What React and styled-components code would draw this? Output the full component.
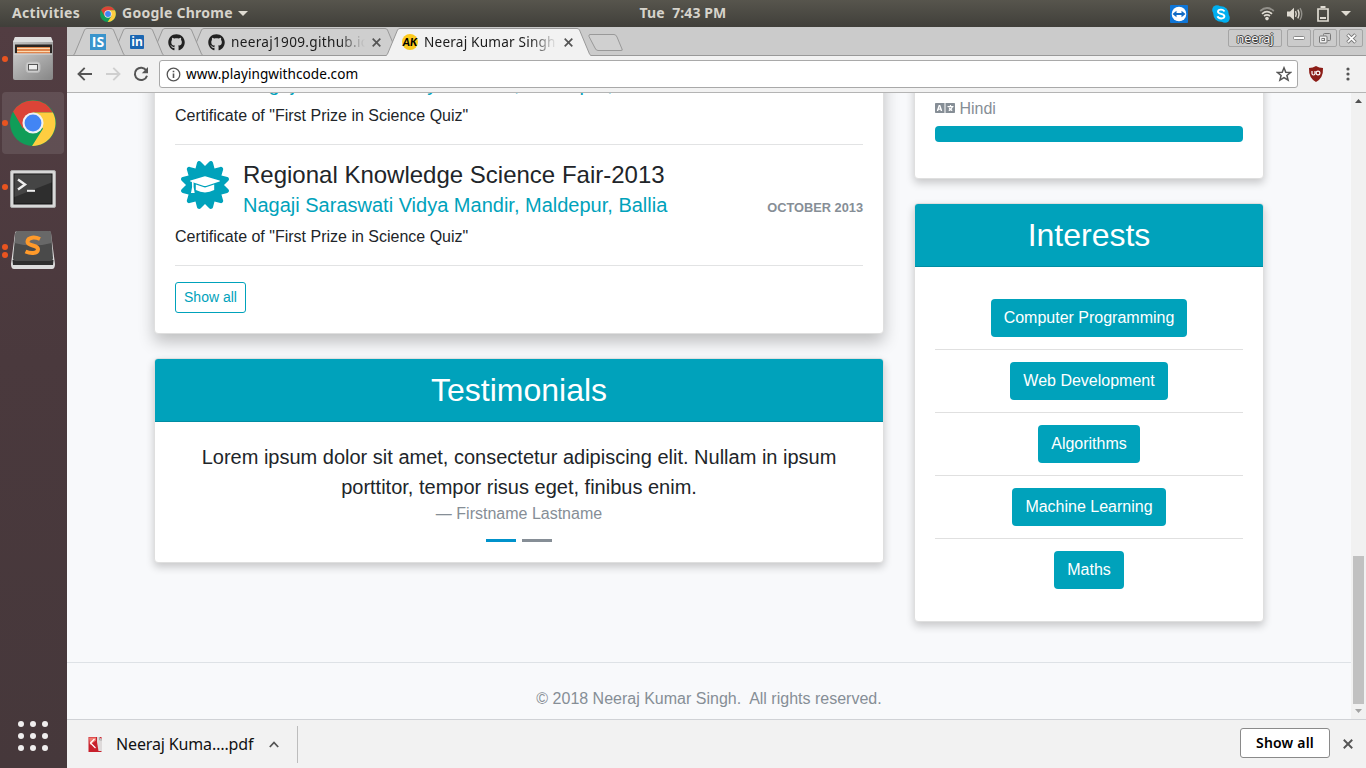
import React from "react";
import styled, { createGlobalStyle } from "styled-components";
import { FaCertificate, FaLanguage, FaGithub } from "react-icons/fa";

const teal = "#00a2bb";
const ui = '"Noto Sans", "Open Sans", sans-serif';

const Global = createGlobalStyle`
  * { box-sizing: border-box; }
  body { margin: 0; overflow: hidden; font-family: "Liberation Sans", Arial, sans-serif; }
  h2, h3, h4, p { margin: 0; font-weight: 400; }
  button { font: inherit; margin: 0; }
  svg { display: block; flex: none; }
`;

const Desktop = styled.div`
  width: 1366px; height: 768px; display: flex; flex-direction: column; overflow: hidden;
`;

/* ---------- top panel ---------- */
const Panel = styled.header`
  height: 27px; flex: none; display: grid; grid-template-columns: 1fr auto 1fr;
  align-items: center; background: linear-gradient(#57554d, #403f3a);
  color: #d6d3cb; font: 700 14px/27px ${ui};
`;
const PanelLeft = styled.div`display: flex; align-items: center; padding-left: 12px;`;
const PanelText = styled.span`
  letter-spacing: ${(p) => p.$ls || 0}px; margin-right: ${(p) => p.$mr || 0}px;
  margin-left: ${(p) => p.$ml || 0}px; white-space: pre; line-height: 25px; padding-bottom: 2px;
`;
const Tray = styled.div`display: flex; align-items: center; justify-content: flex-end; padding-right: 15px;`;
const TrayItem = styled.span`margin-left: ${(p) => p.$gap}px;`;

/* ---------- dock ---------- */
const Workspace = styled.div`flex: 1; display: flex; min-height: 0;`;
const Dock = styled.nav`
  width: 67px; flex: none; display: flex; flex-direction: column; padding: 1px 2px 17px;
  background: linear-gradient(#523d42, #4a393d 45%, #46383b);
`;
const DockItem = styled.div`
  width: 62px; height: 62px; margin-bottom: 2px; border-radius: 4px; display: flex; align-items: center;
  background: ${(p) => (p.$active ? "rgba(255,255,255,.1)" : "transparent")};
`;
const Dots = styled.span`
  width: 6px; display: flex; flex-direction: column; gap: 2px; margin-right: 2px;
  i { width: 6px; height: 6px; border-radius: 50%; background: #e95420; }
`;
const AppsGrid = styled.div`
  margin: auto 0 0 16px; display: grid; grid-template-columns: repeat(3, 6px); gap: 6px;
  i { width: 6px; height: 6px; border-radius: 50%; background: #f0eeee; }
`;

/* ---------- browser ---------- */
const Browser = styled.main`flex: 1; min-width: 0; display: flex; flex-direction: column; background: #f2f2f2;`;
const TabStrip = styled.div`
  height: 29px; flex: none; display: flex; align-items: flex-start; padding-left: 6px;
  background: #cbcbcb; box-shadow: inset 0 -1px #999;
`;
const TabBox = styled.div`
  position: relative; width: ${(p) => p.$w}px; height: 29px; flex: none; margin-right: -13px;
  z-index: ${(p) => p.$z}; display: flex; align-items: center; padding: 1px 17px 0 ${(p) => p.$pad || 17}px;
  > svg:first-child { position: absolute; left: 0; top: 0; z-index: -1; }
`;
const TabTitle = styled.span`
  font: 13.6px/20px ${ui}; letter-spacing: ${(p) => p.$ls}px; color: #1c1c1c; white-space: nowrap; overflow: hidden;
  width: ${(p) => p.$w}px; margin: 0 7px 0 6px; flex: none;
  mask-image: linear-gradient(90deg, #000 80%, transparent);
`;
const IsBadge = styled.span`
  width: 16px; height: 16px; background: #3a94cc; color: #fff; font: 700 14px/16px "Open Sans", sans-serif;
  text-align: center; flex: none;
`;
const InBadge = styled.span`
  width: 14px; height: 14px; border-radius: 1px; background: #1a66b2; color: #fff; margin-left: 1px;
  font: 700 12px/13px "Open Sans", sans-serif; text-align: center;
`;
const AkBadge = styled.span`
  width: 16px; height: 16px; border-radius: 50%; background: #fcca1e; color: #000; display: flex;
  align-items: center; justify-content: center; font: italic 900 11px/16px Lato, sans-serif;
`;
const WindowButtons = styled.div`display: flex; margin: 2px 3px 0 auto; gap: 2px;`;
const WindowButton = styled.span`
  width: ${(p) => p.$w || 24}px; height: 18px; border: 1px solid #a5a5a5; border-radius: 2px;
  margin-right: ${(p) => p.$mr || 0}px;
  display: flex; align-items: center; justify-content: center;
  font: 12.5px/15px ${ui}; color: #f6f6f6;
  text-shadow: 0 1px #444, 1px 0 #444, -1px 0 #444, 0 -1px #444;
`;
const Toolbar = styled.div`
  height: 37px; flex: none; display: flex; align-items: center; padding: 0 10px; background: #f2f2f2;
  border-bottom: 1px solid #b4b4b4;
`;
const NavIcons = styled.div`display: flex; gap: 12px; width: 82px;`;
const Omnibox = styled.div`
  width: 1139px; height: 28px; border: 1px solid #a9a9a9; border-radius: 3px; background: #fff;
  display: flex; align-items: center; padding: 0 5px 0 6px; font: 13.6px/20px ${ui}; color: #000;
`;
const Url = styled.span`flex: 1; margin-left: 5px; letter-spacing: 0.04px;`;
const ToolbarEnd = styled.div`display: flex; align-items: center; gap: 22px; margin-left: 10px;`;

const Viewport = styled.div`flex: 1; min-height: 0; display: flex; background: #f8f9fb;`;
const Page = styled.div`
  flex: 1; display: flex; flex-direction: column; overflow: hidden; color: #212529; font-size: 16px; line-height: 24px;
`;
const Columns = styled.div`
  width: 1110px; margin: -30px auto 0; display: grid; grid-template-columns: 730px 350px; column-gap: 30px;
  height: 599px; flex: none; align-items: start;
`;
const Column = styled.div`display: flex; flex-direction: column; gap: 24px;`;
const Card = styled.section`
  background: #fff; border: 1px solid #dfdfdf; border-radius: 4px;
  height: ${(p) => p.$h}px; overflow: hidden;
  box-shadow: ${(p) => (p.$raised ? "0 8px 16px rgba(0,0,0,.23)" : "0 4px 8px rgba(0,0,0,.2)")};
`;
const CardTitle = styled.h2`
  height: 63px; padding-top: 12px; text-align: center; background: ${teal}; color: #fff;
  font-size: 32px; line-height: 38px; border-bottom: 1px solid rgba(0, 0, 0, 0.125);
`;
const CardBody = styled.div`padding: ${(p) => p.$pad || "20px"};`;
const Rule = styled.hr`border: 0; height: 1px; background: #e2e3e4; margin: 16px 0;`;
const Entry = styled.article`
  display: grid; grid-template-columns: 60px 1fr; column-gap: 8px;
  &:first-child { margin-top: -24px; }
`;
const Badge = styled.div`
  height: 50px; width: 60px; margin-top: -1px; display: grid; place-items: center; color: ${teal};
  > svg { grid-area: 1 / 1; }
`;
const EntryTitle = styled.h3`font-size: 24px; line-height: 27px; white-space: nowrap;`;
const EntryMeta = styled.div`display: flex; justify-content: space-between; align-items: baseline; margin-top: 5px; height: 24px;`;
const School = styled.h4`font-size: 20px; line-height: 24px; color: ${teal};`;
const When = styled.span`font-size: 12.8px; line-height: 24px; font-weight: 700; color: #868e96; text-transform: uppercase;`;
const Description = styled.p`grid-column: 1 / -1; margin-top: 8px; line-height: 24px;`;
const OutlineButton = styled.button`
  display: block; width: 71px; height: 31px; border: 1px solid ${teal}; border-radius: 3px; background: #fff;
  color: ${teal}; font-size: 14px; padding: 0 0 2px;
`;
const Quote = styled.blockquote`
  margin: 0; text-align: center; font-size: 20px; line-height: 30px; padding: 0 20px;
`;
const Cite = styled.p`font-size: 16px; line-height: 24px; color: #868e96; text-align: center;`;
const Indicators = styled.div`display: flex; justify-content: center; gap: 6px; margin-top: 13px;`;
const Indicator = styled.span`width: 30px; height: 3px; background: ${(p) => (p.$on ? "#0092cb" : "#868e96")};`;
const Language = styled.div`display: flex; align-items: center; gap: 4.45px; color: #868e96; line-height: 24px;`;
const LanguageIcon = styled(FaLanguage)`width: 20px; height: 16px; margin-top: -2px;`;
const Bar = styled.div`height: 16px; margin-top: 5px; border-radius: 4px; background: ${teal};`;
const Interest = styled.div`
  height: 63px; padding-top: 12px; text-align: center; border-bottom: 1px solid #e0e0e0;
  &:last-child { border: 0; }
`;
const Pill = styled.span`
  display: inline-block; height: 38px; padding: 0 13px; border-radius: 4px; background: ${teal}; color: #fff; line-height: 37px;
`;
const PageFooter = styled.footer`
  flex: 1; border-top: 1px solid #dee2e6; padding-top: 24px; text-align: center; color: #868e96; white-space: pre;
`;
const Scrollbar = styled.div`
  width: 15px; display: flex; flex-direction: column; align-items: center; background: #f1f1f1; padding: 6px 0 6px;
`;
const Thumb = styled.div`width: 11px; height: 148px; margin: auto 0 5px; background: #c1c1c1;`;
const Shelf = styled.footer`
  height: 49px; flex: none; border-top: 1px solid #d0d2d6; background: #f2f2f2; display: flex; align-items: center; padding: 0 13px 0 20px;
`;
const Download = styled.div`
  width: 211px; height: 37px; border-right: 1px solid #bdbdbd; display: flex; align-items: center;
  font: 16px/24px ${ui}; color: #111;
`;
const FileName = styled.span`width: 138px; margin: 0 15px 0 13px; white-space: nowrap; letter-spacing: -0.14px;`;
const ShelfButton = styled.button`
  width: 90px; height: 30px; margin: 0 13px 3px auto; border: 1px solid #8a8a8a; border-radius: 3px; background: #fff;
  font: 600 14px/20px ${ui}; letter-spacing: 0.2px; color: #000; padding: 0;
`;

const ChromeLogo = ({ size }) => (
  <svg width={size} height={size} viewBox="0 0 48 48">
    <circle cx="24" cy="24" r="24" fill="#109d58" />
    <path d="M3.2 12A24 24 0 0 1 44.8 13H24L13.6 30z" fill="#dc4437" />
    <path d="M44.8 13A24 24 0 0 1 23 48L34.4 30 24 13z" fill="#ffcd40" />
    <circle cx="24" cy="24" r="11" fill="#f1f1f1" />
    <circle cx="24" cy="24" r="8.8" fill="#4285f4" />
  </svg>
);

const Cross = ({ size = 9, color = "#555", w = 1.7 }) => (
  <svg width={size} height={size} viewBox="0 0 9 9" stroke={color} strokeWidth={w}>
    <path d="M.7.7l7.6 7.6M8.3.7L.7 8.3" />
  </svg>
);

const CapIcon = () => (
  <svg width="30" height="18" viewBox="0 0 30 18" fill="#fff">
    <path d="M14 .4Q15 .1 16 .4L29.500 4.400Q30.400 4.900 29.500 5.400L16 9.900Q15 10.200 14 9.900L.5 5.400Q-.4 4.900.5 4.400z" />
    <path d="M5.800 8.600L14 11.300Q15 11.600 16 11.300L24.200 8.600V14Q15 18.800 5.800 14z" />
    <path d="M1.900 5.700L3.600 6.300V11L4.700 17H1L2.100 11z" />
  </svg>
);

function Tab({ width, z, active, pad, children }) {
  const w = width;
  const edge = `M0 28.5L1.5 27 11.5 3Q12.2 1.5 14 1.5H${w - 14}Q${w - 12.2} 1.5 ${w - 11.5} 3L${w - 1.5} 27 ${w} 28.5`;
  return (
    <TabBox $w={w} $z={z} $pad={pad}>
      <svg width={w} height="29">
        <path d={edge} fill={active ? "#f2f2f2" : "#cfcfcf"} stroke="#999" />
        {active ? <path d={`M1 28.5H${w - 1}`} stroke="#f2f2f2" /> : <path d={`M0 28.5H${w}`} stroke="#999" />}
      </svg>
      {children}
    </TabBox>
  );
}

const FilesIcon = () => (
  <svg width="46" height="46" viewBox="-1 0 46 46">
    <defs><linearGradient id="cab" x1="0" y1="0" x2="1" y2="1"><stop offset="0" stopColor="#c6c6c6" /><stop offset="1" stopColor="#888" /></linearGradient></defs>
    <path d="M4 1h36l2 5v36q0 2-2 2H4q-2 0-2-2V6z" fill="url(#cab)" />
    <path d="M4 1h36l2 5H2z" fill="#dedede" />
    <path d="M4 8.500h37v9H4z" fill="#2a2522" />
    <path d="M6 11h33v7H6z" fill="#d9692b" />
    <path d="M6 12.500h33M6 15.500h33" stroke="#fbd9b0" strokeWidth="1.400" />
    <path d="M3 17.500h38v25H3z" fill="url(#cab)" />
    <path d="M3 18h38" stroke="#ddd" />
    <rect x="15" y="26" width="14" height="10.500" rx="3" fill="#ccc" stroke="#bbb" />
    <rect x="17.500" y="28.500" width="9" height="5.500" fill="#eee" stroke="#555" />
  </svg>
);
const TerminalIcon = () => (
  <svg width="46" height="41" viewBox="0 -3 46 41">
    <rect x=".5" y=".5" width="45" height="37" rx="1.500" fill="#d8d8d8" stroke="#aaa" />
    <rect x="4" y="4" width="38" height="30" fill="#2e2e2e" stroke="#111" />
    <path d="M4.500 4.500h37v8L4.500 27z" fill="#454545" />
    <path d="M8 9.500l7 5-7 5" fill="none" stroke="#eee" strokeWidth="2.400" />
    <path d="M17 20.800h8" stroke="#eee" strokeWidth="2" />
  </svg>
);
const SublimeIcon = () => (
  <svg width="46" height="42" viewBox="0 0 46 42">
    <path d="M5 3Q5 1 8 1H38Q41 1 41 3L45 34Q45 39 42 39H4Q1 39 1 34z" fill="#dcdcdc" />
    <path d="M2.500 30H43.500L43 35H3z" fill="#2e2e2e" />
    <path d="M5.500 3Q6 1 8 1H38Q40.500 1 41 3L43 28Q43 31 40 31H6Q3 31 3 28z" fill="#4a4a4a" />
    <path d="M5.500 3Q6 1 8 1H38Q40.500 1 41 3L41.500 13Q23 18 4.500 13z" fill="#686868" />
    <path d="M30 9C25 6.800 18 6.800 17.500 11.500C17 16.500 28.500 14.500 28 19.500C27.500 24 20 23.500 15.500 21.500" fill="none" stroke="#ff9a2a" strokeWidth="4" />
  </svg>
);
const TeamViewerIcon = () => (
  <svg width="18" height="18" viewBox="0 0 18 18"><rect width="18" height="18" rx="1" fill="#0f76d8" /><circle cx="9" cy="9" r="7.300" fill="#fff" /><path d="M2.500 9L6.500 5.800V8h5V5.800L15.500 9l-4 3.200V10h-5v2.200z" fill="#126bc5" /></svg>
);
const SkypeIcon = () => (
  <svg width="18" height="18" viewBox="0 0 18 18"><circle cx="9" cy="9" r="7.700" fill="#00aff0" /><circle cx="5" cy="5" r="4.800" fill="#00aff0" /><circle cx="13" cy="13" r="4.800" fill="#00aff0" /><path d="M12.300 6.500C11.500 4 6 4 6 6.700C6 9.600 12.400 8.200 12.400 11.300C12.300 14.300 6.200 14 5.600 11.300" fill="none" stroke="#fff" strokeWidth="1.900" /></svg>
);
const WifiIcon = () => (
  <svg width="16" height="15" viewBox="0 0 16 15" fill="none" strokeWidth="1.700"><path d="M1.200 5Q8-1 14.800 5" stroke="#92908a" /><path d="M3 7.800Q8 3.500 13 7.800" stroke="#dfdbd2" /><path d="M5 10Q8 7.800 11 10" stroke="#dfdbd2" /><circle cx="8" cy="12.600" r="1.800" fill="#dfdbd2" /></svg>
);
const VolumeIcon = () => (
  <svg width="16" height="14" viewBox="0 0 16 14"><path d="M0 4.500h3L7 .8v12.400L3 9.500H0z" fill="#dfdbd2" /><path d="M8.500 4.200Q10 7 8.500 9.800M10.800 2.700Q13.200 7 10.800 11.300" fill="none" stroke="#dfdbd2" strokeWidth="1.400" /><path d="M13 1.200Q16.500 7 13 12.800" fill="none" stroke="#92908a" strokeWidth="1.400" /></svg>
);
const BatteryIcon = () => (
  <svg width="12" height="16" viewBox="0 0 12 16"><path d="M3.500 0h5v2h-5z" fill="#dfdbd2" /><path d="M1 3h10v12H1z" fill="none" stroke="#dfdbd2" strokeWidth="1.700" /><path d="M3 12h6" stroke="#dfdbd2" strokeWidth="2" /></svg>
);
const Caret = ({ w = 10, h = 5, color = "#dfdbd2", up }) => (
  <svg width={w} height={h} viewBox="0 0 10 5" preserveAspectRatio="none"><path d={up ? "M0 5L5 0l5 5z" : "M0 0h10L5 5z"} fill={color} /></svg>
);
const ArrowIcon = ({ flip, color }) => (
  <svg width="16" height="16" viewBox="0 0 16 16" fill="none" stroke={color} strokeWidth="1.900"><path d={flip ? "M1 8h13M8.300 1.800L14.500 8l-6.200 6.200" : "M15 8H2M7.700 1.800L1.500 8l6.200 6.200"} /></svg>
);

const entries = [
  { title: "Regional Knowledge Science Fair", date: "" },
  { title: "Regional Knowledge Science Fair-2013", date: "October 2013" },
];
const interests = ["Computer Programming", "Web Development", "Algorithms", "Machine Learning", "Maths"];

export default function App() {
  return (
    <Desktop>
      <Global />
      <Panel>
        <PanelLeft>
          <PanelText $ls={0.3} $mr={20}>Activities</PanelText>
          <ChromeLogo size={16} />
          <PanelText $ls={0.25} $ml={6} $mr={5}>Google Chrome</PanelText>
          <Caret />
        </PanelLeft>
        <PanelText $ls={0.1}>Tue  7:43 PM</PanelText>
        <Tray>
          <TrayItem><TeamViewerIcon /></TrayItem>
          <TrayItem $gap={24}><SkypeIcon /></TrayItem>
          <TrayItem $gap={29}><WifiIcon /></TrayItem>
          <TrayItem $gap={12}><VolumeIcon /></TrayItem>
          <TrayItem $gap={14}><BatteryIcon /></TrayItem>
          <TrayItem $gap={12}><Caret /></TrayItem>
        </Tray>
      </Panel>
      <Workspace>
        <Dock>
          <DockItem><Dots><i /></Dots><FilesIcon /></DockItem>
          <DockItem $active><Dots><i /></Dots><ChromeLogo size={46} /></DockItem>
          <DockItem><Dots><i /></Dots><TerminalIcon /></DockItem>
          <DockItem><Dots><i /><i /></Dots><SublimeIcon /></DockItem>
          <AppsGrid>{Array.from({ length: 9 }, (_, i) => <i key={i} />)}</AppsGrid>
        </Dock>
        <Browser>
          <TabStrip>
            <Tab width={52} z={4}><IsBadge>IS</IsBadge></Tab>
            <Tab width={52} z={3}><InBadge>in</InBadge></Tab>
            <Tab width={52} z={2}><FaGithub size={17} color="#222" /></Tab>
            <Tab width={209} z={1} pad={18}>
              <FaGithub size={17} color="#222" />
              <TabTitle $w={134} $ls={0.3}>neeraj1909.github.io</TabTitle>
              <Cross />
            </Tab>
            <Tab width={205} z={5} active pad={16}>
              <AkBadge>AK</AkBadge>
              <TabTitle $w={133} $ls={0.2}>Neeraj Kumar Singh</TabTitle>
              <Cross />
            </Tab>
            <svg width="50" height="29"><path d="M12 7.500H36Q38 7.500 39 10L44 22Q45 23.500 43 23.500H20Q18 23.500 17 21L11 9.500Q10.500 7.500 12 7.500z" fill="#d0d0d0" stroke="#999" /></svg>
            <WindowButtons>
              <WindowButton $w={54} $mr={3}>neeraj</WindowButton>
              <WindowButton><svg width="12" height="5"><rect x=".5" y=".5" width="11" height="3" rx="1" fill="#fff" stroke="#888" /></svg></WindowButton>
              <WindowButton><svg width="12" height="11" fill="none" stroke="#777"><path d="M4.500 2.500V1.500Q4.500.5 5.500.5H10.500Q11.500.5 11.500 1.500V6.500Q11.500 7.500 10.500 7.500H8.500" /><rect x=".5" y="3" width="7.500" height="7" rx="1" fill="#eee" /><rect x="3" y="5.500" width="2.500" height="2" /></svg></WindowButton>
              <WindowButton><svg width="11" height="11"><path d="M1.500 1.500l8 8M9.500 1.500l-8 8" stroke="#777" strokeWidth="3.500" /><path d="M1.800 1.800l7.400 7.400M9.200 1.800l-7.400 7.400" stroke="#fff" strokeWidth="1.700" /></svg></WindowButton>
            </WindowButtons>
          </TabStrip>
          <Toolbar>
            <NavIcons>
              <ArrowIcon color="#555" />
              <ArrowIcon flip color="#cfcfcf" />
              <svg width="16" height="16" viewBox="0 0 16 16"><path d="M13.300 4.500A6.200 6.200 0 1 0 14 9.700" fill="none" stroke="#555" strokeWidth="2" /><path d="M15 1v6.200H8.800z" fill="#555" /></svg>
            </NavIcons>
            <Omnibox>
              <svg width="15" height="15" viewBox="0 0 15 15"><circle cx="7.500" cy="7.500" r="6.300" fill="none" stroke="#555" strokeWidth="1.300" /><path d="M7.500 6.500v4.500M7.500 3.700v1.600" stroke="#555" strokeWidth="1.600" /></svg>
              <Url>www.playingwithcode.com</Url>
              <svg width="16" height="16" viewBox="0 0 16 16"><path d="M8 1.800L9.800 6.200l4.700.3-3.600 3 1.200 4.600L8 11.600l-4.100 2.500 1.200-4.600-3.600-3 4.700-.3z" fill="none" stroke="#555" strokeWidth="1.500" /></svg>
            </Omnibox>
            <ToolbarEnd>
              <svg width="16" height="16" viewBox="0 0 16 16"><path d="M8 0Q11 2 15 2Q15.500 12 8 16Q.5 12 1 2Q5 2 8 0z" fill="#8c1d17" /><path d="M4 5v2.500Q4 9 5.500 9T7 7.500V5" fill="none" stroke="#fff" strokeWidth="1.200" /><circle cx="10" cy="7" r="1.900" fill="none" stroke="#fff" strokeWidth="1.200" /></svg>
              <svg width="4" height="14" fill="#555"><circle cx="2" cy="2" r="1.600" /><circle cx="2" cy="7" r="1.600" /><circle cx="2" cy="12" r="1.600" /></svg>
            </ToolbarEnd>
          </Toolbar>
          <Viewport>
            <Page>
              <Columns>
                <Column>
                  <Card $h={271} $raised>
                    <CardBody $pad="0 20px">
                      {entries.map((e, i) => (
                        <React.Fragment key={i}>
                          {i > 0 && <Rule />}
                          <Entry>
                            <Badge><FaCertificate size={48} /><CapIcon /></Badge>
                            <div>
                              <EntryTitle>{e.title}</EntryTitle>
                              <EntryMeta>
                                <School>Nagaji Saraswati Vidya Mandir, Maldepur, Ballia</School>
                                <When>{e.date}</When>
                              </EntryMeta>
                            </div>
                            <Description>Certificate of "First Prize in Science Quiz"</Description>
                          </Entry>
                        </React.Fragment>
                      ))}
                      <Rule />
                      <OutlineButton>Show all</OutlineButton>
                    </CardBody>
                  </Card>
                  <Card $h={205}>
                    <CardTitle>Testimonials</CardTitle>
                    <CardBody>
                      <Quote>Lorem ipsum dolor sit amet, consectetur adipiscing elit. Nullam in ipsum porttitor, tempor risus eget, finibus enim.</Quote>
                      <Cite>— Firstname Lastname</Cite>
                      <Indicators><Indicator $on /><Indicator /></Indicators>
                    </CardBody>
                  </Card>
                </Column>
                <Column>
                  <Card $h={116}>
                    <CardBody $pad="33px 20px 20px">
                      <Language><LanguageIcon />Hindi</Language>
                      <Bar />
                    </CardBody>
                  </Card>
                  <Card $h={419}>
                    <CardTitle>Interests</CardTitle>
                    <CardBody>
                      {interests.map((t) => <Interest key={t}><Pill>{t}</Pill></Interest>)}
                    </CardBody>
                  </Card>
                </Column>
              </Columns>
              <PageFooter>© 2018 Neeraj Kumar Singh.  All rights reserved.</PageFooter>
            </Page>
            <Scrollbar><Caret w={7} h={4} color="#505050" up /><Thumb /><Caret w={7} h={4} color="#a3a3a3" /></Scrollbar>
          </Viewport>
          <Shelf>
            <Download>
              <svg width="16" height="17" viewBox="0 0 16 17"><rect x="1.500" y="1" width="13" height="15" fill="#c8202c" /><path d="M2 1.500h7v3L3 9z" fill="#ef7a70" /><path d="M7.500 3L3.500 7l5 5" fill="none" stroke="#fff" strokeWidth="1.200" /><path d="M10 1h2.500l2.500 3v11h-3.500L10 6z" fill="#dedada" /><path d="M12.500 1v3H15" fill="none" stroke="#aaa" /></svg>
              <FileName>Neeraj Kuma….pdf</FileName>
              <svg width="10" height="7" viewBox="0 0 10 7"><path d="M.8 6L5 1.500 9.200 6" fill="none" stroke="#555" strokeWidth="1.800" /></svg>
            </Download>
            <ShelfButton>Show all</ShelfButton>
            <Cross size={10} />
          </Shelf>
        </Browser>
      </Workspace>
    </Desktop>
  );
}
